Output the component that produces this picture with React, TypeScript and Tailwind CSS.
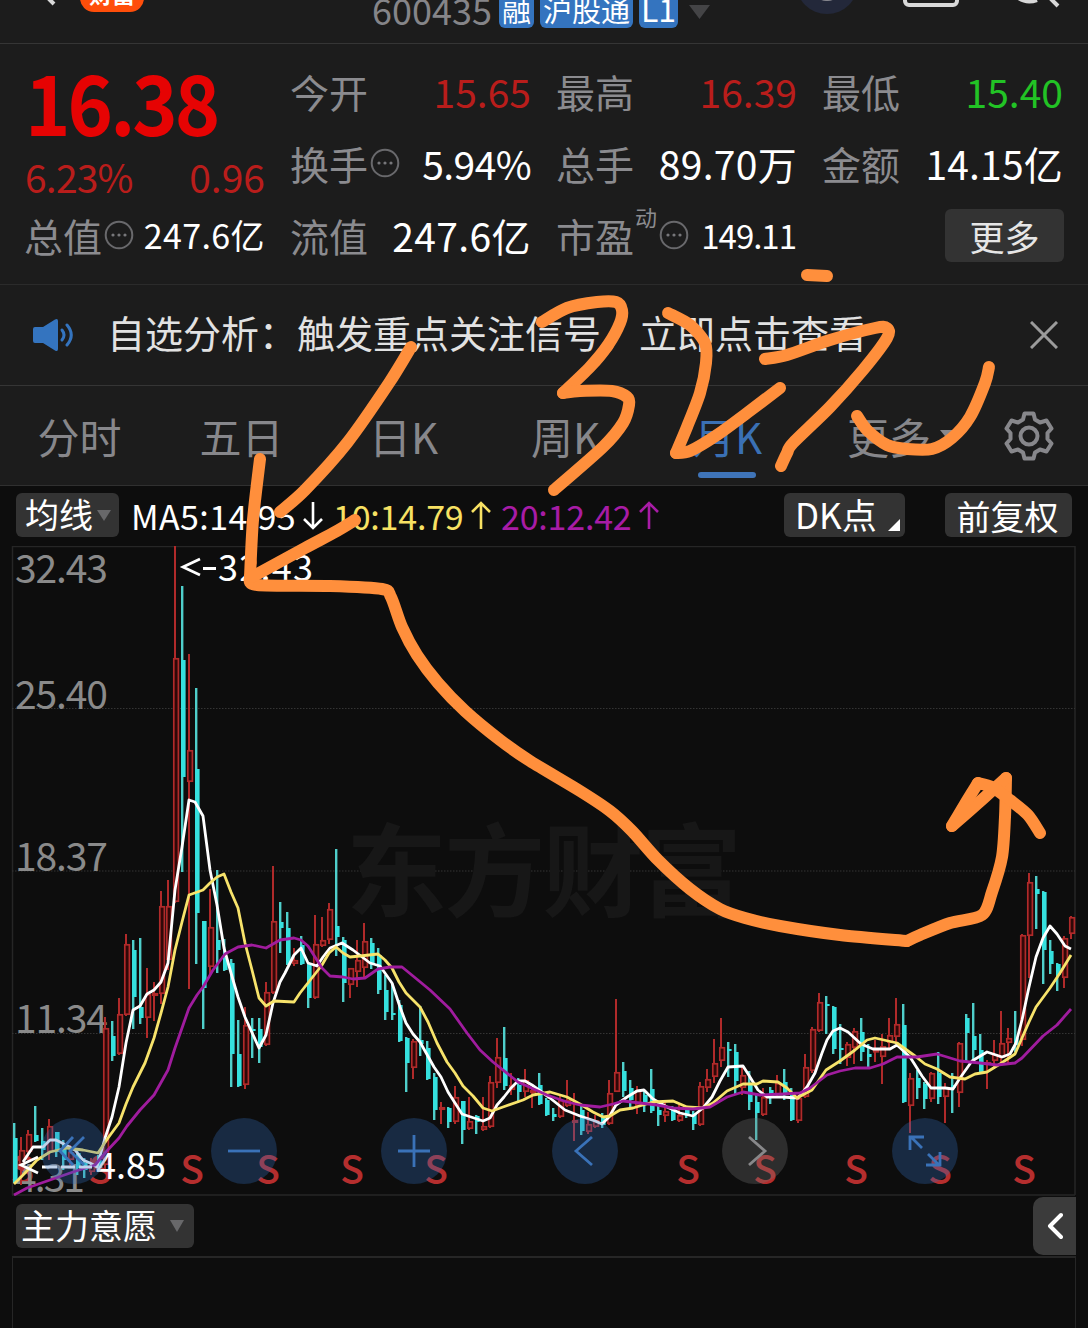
import clsx from "clsx";

type Point = [number, number];

// [kind, high, low, body top, body bottom] in chart pixels, one per month
type Candle = ["r" | "c", number, number, number, number];

const FONT = "font-['Noto_Sans_CJK_SC',sans-serif]";

const candles: Candle[] = [
  ["c", 1123, 1183, 1138, 1183], ["r", 1137, 1185, 1150, 1165], ["r", 1130, 1156, 1134, 1152], ["c", 1106, 1142, 1135, 1141],
  ["c", 1128, 1160, 1141, 1150], ["r", 1119, 1160, 1126, 1152], ["c", 1132, 1157, 1132, 1152], ["c", 1140, 1170, 1145, 1160],
  ["r", 1145, 1165, 1152, 1160], ["c", 1150, 1175, 1153, 1168], ["c", 1158, 1178, 1163, 1170], ["r", 1158, 1175, 1165, 1172],
  ["c", 1155, 1172, 1160, 1168], ["r", 1017, 1170, 1028, 1165], ["c", 1021, 1061, 1036, 1056], ["r", 998, 1055, 1014, 1054],
  ["r", 934, 1016, 944, 1015], ["c", 940, 1029, 950, 997], ["c", 938, 1024, 1007, 1018], ["r", 968, 1038, 994, 1018],
  ["r", 982, 1021, 993, 996], ["r", 891, 1004, 906, 994], ["r", 880, 970, 906, 960], ["r", 546, 903, 658, 902],
  ["c", 586, 872, 660, 777], ["r", 654, 989, 750, 782], ["c", 688, 964, 769, 913], ["c", 921, 1029, 921, 988],
  ["r", 889, 975, 927, 967], ["c", 870, 973, 940, 950], ["c", 939, 971, 958, 970], ["c", 959, 1087, 963, 1054],
  ["c", 1020, 1087, 1054, 1086], ["r", 1007, 1089, 1025, 1085], ["c", 1018, 1058, 1029, 1031], ["c", 1018, 1063, 1029, 1047],
  ["r", 982, 1046, 992, 1045], ["r", 866, 994, 921, 993], ["c", 902, 953, 922, 928], ["c", 912, 965, 928, 964],
  ["r", 948, 966, 960, 964], ["c", 936, 965, 945, 964], ["c", 963, 1008, 965, 998], ["r", 915, 999, 944, 998],
  ["r", 917, 947, 940, 946], ["r", 903, 944, 909, 940], ["c", 849, 956, 926, 937], ["c", 937, 1002, 940, 983],
  ["r", 968, 998, 968, 985], ["r", 940, 987, 960, 972], ["r", 923, 977, 941, 968], ["c", 938, 969, 943, 964],
  ["c", 948, 994, 955, 990], ["c", 975, 1020, 990, 1012], ["c", 983, 1020, 1013, 1015], ["c", 1000, 1042, 1005, 1041],
  ["c", 1037, 1092, 1038, 1063], ["r", 1039, 1079, 1041, 1068], ["c", 1006, 1056, 1040, 1044], ["c", 1041, 1080, 1048, 1079],
  ["c", 1073, 1120, 1077, 1110], ["r", 1102, 1124, 1107, 1110], ["c", 1107, 1128, 1108, 1122], ["r", 1086, 1124, 1097, 1122],
  ["c", 1101, 1144, 1101, 1130], ["r", 1097, 1130, 1121, 1129], ["c", 1115, 1134, 1116, 1122], ["r", 1097, 1131, 1126, 1130],
  ["r", 1076, 1128, 1082, 1127], ["r", 1038, 1088, 1057, 1083], ["c", 1027, 1090, 1058, 1086], ["r", 1073, 1095, 1085, 1090],
  ["c", 1078, 1102, 1085, 1092], ["r", 1069, 1097, 1080, 1092], ["r", 1088, 1108, 1090, 1093], ["c", 1073, 1105, 1085, 1104],
  ["c", 1098, 1116, 1100, 1115], ["c", 1108, 1121, 1114, 1117], ["r", 1095, 1118, 1100, 1117], ["r", 1080, 1107, 1100, 1106],
  ["r", 1093, 1141, 1120, 1123], ["c", 1105, 1135, 1110, 1131], ["r", 1112, 1134, 1124, 1132], ["r", 1115, 1128, 1120, 1127],
  ["c", 1113, 1128, 1116, 1125], ["r", 1080, 1125, 1093, 1124], ["r", 999, 1092, 1072, 1092], ["c", 1062, 1097, 1071, 1091],
  ["c", 1080, 1108, 1088, 1100], ["r", 1086, 1114, 1090, 1106], ["c", 1090, 1112, 1095, 1104], ["c", 1069, 1113, 1089, 1111],
  ["c", 1102, 1126, 1110, 1115], ["r", 1103, 1122, 1111, 1116], ["c", 1106, 1121, 1108, 1120], ["r", 1105, 1122, 1115, 1121],
  ["c", 1107, 1118, 1110, 1116], ["c", 1111, 1130, 1113, 1124], ["r", 1082, 1126, 1086, 1125], ["r", 1069, 1092, 1079, 1088],
  ["r", 1039, 1083, 1063, 1077], ["r", 1018, 1067, 1047, 1061], ["c", 1042, 1077, 1049, 1051], ["c", 1044, 1094, 1052, 1081],
  ["r", 1067, 1095, 1075, 1088], ["c", 1071, 1110, 1083, 1102], ["c", 1093, 1140, 1102, 1113], ["r", 1088, 1116, 1097, 1115],
  ["c", 1087, 1104, 1090, 1097], ["r", 1075, 1098, 1083, 1095], ["c", 1069, 1100, 1082, 1094], ["c", 1088, 1121, 1094, 1120],
  ["r", 1095, 1123, 1098, 1121], ["r", 1054, 1098, 1067, 1097], ["r", 1027, 1073, 1029, 1071], ["r", 993, 1032, 1002, 1031],
  ["c", 996, 1034, 1004, 1006], ["c", 1006, 1054, 1007, 1049], ["c", 1024, 1064, 1048, 1050], ["r", 1042, 1066, 1044, 1058],
  ["r", 1028, 1064, 1031, 1048], ["c", 1018, 1061, 1032, 1052], ["c", 1044, 1067, 1054, 1057], ["r", 1040, 1062, 1050, 1052],
  ["r", 1034, 1084, 1046, 1057], ["r", 1018, 1048, 1035, 1043], ["r", 998, 1043, 1024, 1037], ["c", 1004, 1103, 1025, 1102],
  ["r", 1073, 1133, 1078, 1106], ["c", 1070, 1099, 1078, 1088], ["c", 1082, 1109, 1084, 1099], ["r", 1072, 1102, 1073, 1099],
  ["c", 1052, 1104, 1073, 1097], ["r", 1083, 1123, 1087, 1097], ["c", 1073, 1113, 1085, 1088], ["r", 1042, 1107, 1043, 1093],
  ["c", 1014, 1062, 1018, 1033], ["c", 1003, 1062, 1036, 1050], ["c", 1034, 1073, 1050, 1072], ["r", 1060, 1089, 1062, 1065],
  ["r", 1040, 1067, 1054, 1061], ["r", 1011, 1065, 1043, 1058], ["r", 1028, 1063, 1038, 1043], ["c", 1011, 1052, 1038, 1045],
  ["r", 934, 1046, 935, 1040], ["r", 873, 978, 882, 936], ["c", 876, 929, 889, 894], ["c", 891, 984, 892, 950],
  ["c", 940, 974, 951, 964], ["c", 963, 991, 964, 975], ["r", 936, 988, 938, 978], ["r", 916, 939, 917, 934],
];

const ma5: Point[] = [
  [23, 1162], [33, 1147], [43, 1147], [50, 1140], [56, 1140], [62, 1143], [75, 1150], [83, 1160], [90, 1163], [97, 1167], [105, 1138],
  [112, 1117], [119, 1087], [126, 1043], [133, 1010], [140, 1006], [147, 994], [154, 990], [161, 982], [168, 963], [175, 890],
  [182, 847], [189, 800], [195, 802], [203, 816], [210, 870], [217, 905], [224, 948], [231, 973], [238, 997], [245, 1017],
  [259, 1048], [266, 1035], [273, 1003], [280, 982], [285, 973], [294, 955], [301, 948], [308, 963], [317, 966], [323, 957],
  [330, 948], [342, 943], [353, 950], [370, 963], [380, 966], [392, 983], [400, 1007], [406, 1023], [413, 1034], [420, 1042],
  [434, 1067], [441, 1077], [448, 1092], [462, 1114], [477, 1119], [483, 1121], [490, 1118], [497, 1105], [504, 1097],
  [511, 1088], [518, 1081], [525, 1081], [532, 1085], [550, 1098], [565, 1110], [580, 1116], [595, 1121], [602, 1124],
  [609, 1117], [616, 1105], [627, 1097], [637, 1091], [644, 1090], [653, 1099], [667, 1107], [680, 1113], [693, 1116],
  [703, 1108], [712, 1097], [720, 1081], [728, 1067], [743, 1066], [750, 1077], [758, 1090], [767, 1097], [782, 1097],
  [798, 1098], [807, 1087], [815, 1073], [822, 1053], [827, 1040], [833, 1031], [840, 1028], [848, 1032], [861, 1044],
  [873, 1049], [890, 1049], [897, 1045], [910, 1057], [922, 1076], [931, 1088], [945, 1088], [953, 1089], [960, 1078],
  [972, 1061], [987, 1052], [1002, 1057], [1010, 1054], [1016, 1043], [1022, 1020], [1029, 987], [1036, 957], [1043, 938],
  [1050, 926], [1057, 934], [1065, 946], [1071, 949],
];

const ma10: Point[] = [
  [14, 1184], [25, 1173], [37, 1160], [50, 1152], [67, 1148], [83, 1150], [98, 1153], [108, 1138], [119, 1123], [126, 1104],
  [133, 1087], [145, 1063], [154, 1038], [161, 1013], [168, 987], [175, 950], [182, 922], [189, 895], [203, 890], [210, 883],
  [217, 877], [224, 874], [231, 892], [238, 908], [245, 943], [252, 970], [259, 998], [266, 1006], [274, 1001], [294, 1002],
  [300, 993], [315, 974], [322, 965], [329, 953], [336, 947], [343, 953], [350, 957], [360, 956], [378, 954], [385, 960],
  [392, 968], [399, 982], [406, 993], [413, 1000], [420, 1007], [428, 1022], [437, 1043], [447, 1062], [455, 1073], [463, 1086],
  [473, 1096], [483, 1108], [492, 1111], [503, 1107], [523, 1100], [533, 1095], [550, 1092], [567, 1097], [580, 1104],
  [593, 1112], [603, 1117], [610, 1116], [620, 1110], [633, 1108], [653, 1102], [673, 1101], [687, 1107], [703, 1108],
  [713, 1103], [727, 1091], [743, 1084], [757, 1084], [763, 1081], [778, 1082], [787, 1088], [797, 1098], [812, 1090],
  [826, 1070], [840, 1061], [855, 1050], [867, 1040], [875, 1038], [897, 1043], [915, 1056], [925, 1064], [937, 1069],
  [950, 1077], [965, 1079], [975, 1074], [987, 1072], [1000, 1064], [1015, 1054], [1022, 1038], [1029, 1022], [1036, 1007],
  [1050, 988], [1060, 973], [1071, 955],
];

const ma20: Point[] = [
  [14, 1195], [27, 1188], [50, 1180], [73, 1172], [95, 1165], [105, 1153], [119, 1138], [127, 1126], [140, 1110], [154, 1095],
  [168, 1070], [175, 1048], [182, 1028], [189, 1008], [197, 995], [203, 987], [213, 970], [225, 954], [238, 947], [252, 945],
  [266, 948], [280, 940], [294, 938], [301, 940], [308, 946], [315, 957], [322, 968], [330, 976], [343, 977], [353, 979],
  [365, 978], [378, 969], [390, 967], [402, 967], [413, 976], [430, 990], [450, 1009], [467, 1033], [480, 1050], [493, 1062],
  [518, 1082], [547, 1095], [567, 1102], [580, 1105], [600, 1107], [613, 1104], [623, 1101], [640, 1103], [657, 1105],
  [673, 1108], [693, 1109], [710, 1107], [727, 1097], [743, 1092], [760, 1095], [783, 1094], [800, 1093], [810, 1088],
  [827, 1075], [840, 1071], [855, 1068], [870, 1068], [883, 1064], [897, 1057], [917, 1057], [937, 1054], [947, 1057],
  [960, 1061], [980, 1063], [997, 1065], [1015, 1063], [1022, 1058], [1043, 1036], [1057, 1025], [1071, 1009],
];

// Hand drawn notes over the page
const strokes: Point[][] = [
  [[807, 275], [827, 276]],
  [[542, 322], [567, 308], [597, 302], [616, 302], [622, 310], [620, 323], [608, 345], [590, 367], [563, 393]],
  [[563, 393], [580, 391], [612, 391], [627, 397], [629, 405], [623, 423], [603, 447], [554, 490]],
  [[668, 313], [690, 325], [705, 343], [706, 363], [700, 393], [687, 427], [676, 453]],
  [[676, 453], [690, 451], [717, 435], [747, 413], [780, 388]],
  [[765, 359], [787, 355], [830, 340], [875, 328], [887, 328], [887, 338], [863, 370], [830, 407], [793, 443], [787, 453], [781, 466]],
  [[857, 416], [867, 430], [887, 445], [907, 449], [932, 449], [952, 438], [970, 417], [985, 383], [989, 367]],
  [[411, 347], [389, 383], [347, 443], [305, 490], [280, 512]],
  [[260, 459], [253, 520], [250, 577]],
  [[250, 577], [257, 585], [330, 586], [382, 589], [391, 597], [402, 627], [417, 655], [438, 683],
    [465, 711], [500, 740], [530, 761], [580, 791], [610, 811], [632, 831], [658, 860], [690, 889], [720, 909], [745, 918],
    [780, 926], [840, 935], [907, 941]],
  [[907, 941], [920, 935], [950, 923], [982, 915], [992, 892], [1002, 857], [1005, 817], [1006, 778]],
  [[355, 520], [335, 532], [305, 548], [252, 577]],
  [[1006, 778], [985, 797], [952, 826]],
  [[952, 826], [965, 804], [978, 783]],
  [[978, 783], [992, 787], [1010, 800], [1028, 815], [1040, 833]],
];

const signals = [22, 100, 192, 268, 352, 436, 688, 765, 856, 940, 1024];

const priceLabels = [
  { text: "32.43", y: 583, width: 91 },
  { text: "25.40", y: 709, width: 91 },
  { text: "18.37", y: 871, width: 91 },
  { text: "11.34", y: 1033, width: 91 },
  { text: "4.31", y: 1192, width: 68 },
];

const tabs = ["分时", "五日", "日K", "周K", "月K"];

const toLine = (points: Point[]) => points.map((p) => p.join(",")).join(" ");

// Smooth curve through every point
const toCurve = (points: Point[]) => {
  let d = `M${points[0][0]} ${points[0][1]}`;
  for (let i = 0; i < points.length - 1; i++) {
    const a = points[i - 1] ?? points[i];
    const b = points[i];
    const c = points[i + 1];
    const e = points[i + 2] ?? c;
    d += ` C${b[0] + (c[0] - a[0]) / 7} ${b[1] + (c[1] - a[1]) / 7} ${c[0] - (e[0] - b[0]) / 7} ${c[1] - (e[1] - b[1]) / 7} ${c[0]} ${c[1]}`;
  }
  return d;
};

const Dots = () => (
  <svg className="ml-[2px] h-[30px] w-[30px] shrink-0" viewBox="0 0 30 30" fill="#77777a">
    <circle cx="15" cy="15" r="13.3" fill="none" stroke="#69696c" strokeWidth="2" />
    <circle cx="9" cy="15" r="1.6" />
    <circle cx="15" cy="15" r="1.6" />
    <circle cx="21" cy="15" r="1.6" />
  </svg>
);

const Triangle = ({ className }: { className: string }) => (
  <svg className={className} viewBox="0 0 16 14" preserveAspectRatio="none" fill="currentColor">
    <path d="M0 0H16L8 14Z" />
  </svg>
);

interface QuoteProps {
  label: string;
  value: string;
  color?: string;
  info?: boolean;
}
const Quote = ({ label, value, color = "text-white", info }: QuoteProps) => (
  <div className="flex items-center justify-between text-[39px]">
    <span className="-ml-px flex items-center text-[#8b8b8f]">
      {label}
      {info && <Dots />}
    </span>
    <span className={color}>{value}</span>
  </div>
);

const Header = () => (
  <header className="flex h-11 items-start overflow-hidden border-b border-[#353535]">
    <svg className="ml-[40px] h-2 w-5" viewBox="0 0 20 8" fill="none" stroke="#d8d8d8" strokeWidth="4">
      <path d="M4 -6L14 4" />
    </svg>
    <div className="-mt-7 ml-5 flex h-10 w-16 items-end justify-center overflow-hidden rounded-[14px] bg-[#ff4e0a] pb-[7px] text-[23px] leading-none font-bold text-white">
      财富
    </div>
    <div className="-mt-[13px] ml-[228px] flex text-white">
      <span className="h-10 w-[127px] text-[36px] leading-[45px] text-[#858589]">600435</span>
      <span className="h-[41px] w-[35px] rounded-md bg-[#3474bf] text-center text-[29px] leading-[45px]">融</span>
      <span className="ml-[6px] h-[41px] w-[93px] rounded-md bg-[#3474bf] text-center text-[29px] leading-[45px]">沪股通</span>
      <span className="ml-[6px] h-[41px] w-[39px] rounded-md bg-[#3474bf] text-center text-[32px] leading-[42px]">L1</span>
    </div>
    <Triangle className="mt-[5px] ml-[11px] h-[14px] w-[21px] text-[#444446]" />
    <div className="-mt-[52px] ml-[86px] h-[66px] w-[62px] rounded-full bg-[#23283a]">
      <div className="mx-auto mt-[42px] h-[11px] w-6 rounded-b-full border-b-2 border-[#85858d]" />
    </div>
    <div className="-mt-5 ml-[45px] h-[27px] w-[56px] rounded-md border-4 border-[#d8d8d8]" />
    <svg className="ml-[58px] h-2 w-12" viewBox="0 0 48 8" fill="none" stroke="#d8d8d8" strokeWidth="4">
      <path d="M0 -3Q9 4 20 0M31 -4L41 6" />
    </svg>
  </header>
);

const QuotePanel = () => (
  <section className="grid h-[241px] grid-cols-4 grid-rows-[72px_72px_72px] gap-x-[26px] border-b border-[#2b2b2b] px-[25px] pt-[11px] leading-[72px]">
    <div className="row-span-2">
      <div className="flex h-[84px] items-center pt-[5px]">
        <span className="origin-left scale-x-[0.93] text-[83px] font-bold tracking-[-3.2px] text-[#e60303]">16.38</span>
      </div>
      <div className="flex h-[60px] items-center justify-between pt-[13px] text-[39px] text-[#b91d1b]">
        <span className="tracking-[-0.8px]">6.23%</span>
        <span>0.96</span>
      </div>
    </div>
    <Quote label="今开" value="15.65" color="text-[#b91d1b]" />
    <Quote label="最高" value="16.39" color="text-[#b91d1b]" />
    <Quote label="最低" value="15.40" color="text-[#22c325]" />
    <Quote label="换手" value="5.94%" color="text-white tracking-[-0.6px]" info />
    <Quote label="总手" value="89.70万" color="text-white tracking-[0.3px]" />
    <Quote label="金额" value="14.15亿" color="text-white tracking-[0.2px]" />
    <Quote label="总值" value="247.6亿" color="text-[34px] text-white tracking-[0.4px]" info />
    <Quote label="流值" value="247.6亿" color="text-white tracking-[0.4px]" />
    <div className="flex items-center text-[39px] text-[#8b8b8f]">
      <span className="-ml-px">市盈</span>
      <span className="mb-[39px] ml-px text-[22px] leading-none">动</span>
      <Dots />
      <span className="mr-px ml-auto text-[33px] tracking-[-1px] text-white">149.11</span>
    </div>
    <div className="-mr-px flex items-center justify-end">
      <button className="h-[53px] w-[119px] rounded-md bg-[#333333] text-[35px] leading-[49px] text-[#e6e6e6]">更多</button>
    </div>
  </section>
);

const Notice = () => (
  <section className="flex h-[101px] items-center border-b border-[#353535] pl-8">
    <svg className="h-9 w-[44px]" viewBox="0 0 44 36" fill="none" stroke="#3474bf" strokeWidth="3" strokeLinecap="round">
      <path d="M3 10H11L23 2.5Q26 1 26 4V32Q26 35 23 33.5L11 26H3Q1 26 1 24V12Q1 10 3 10Z" fill="#3474bf" stroke="none" />
      <path d="M30 13Q34 18 30 23" />
      <path d="M35 8Q43.500 18 35 28" />
    </svg>
    <p className="mb-[6px] ml-[31px] text-[38px] leading-none whitespace-pre text-[#e2e2e2]">自选分析：触发重点关注信号，立即点击查看</p>
    <svg className="mr-[30px] ml-auto h-7 w-7" viewBox="0 0 28 28" stroke="#9b9b9b" strokeWidth="3">
      <path d="M1 1L27 27M27 1L1 27" />
    </svg>
  </section>
);

const Tabs = () => (
  <nav className="flex h-[100px] items-center border-b border-[#303030] text-[42px] leading-[97px] text-[#87878b]">
    {tabs.map((tab) => (
      <div
        key={tab}
        className={clsx("relative h-[98px] w-[162px] pr-[3px] text-center", tab === "月K" && "text-[#3a70b4]")}
      >
        {tab}
        {tab === "月K" && <span className="absolute bottom-[7px] left-[50px] h-[6px] w-[58px] rounded-full bg-[#3f74b8]" />}
      </div>
    ))}
    <div className="flex h-[98px] w-[162px] items-center pl-[37px]">
      <span className="h-[98px]">更多</span>
      <Triangle className="ml-[9px] h-[11px] w-[18px]" />
    </div>
    <svg className="ml-[32px] h-[50px] w-[50px]" viewBox="0 0 50 50" fill="none" stroke="#87878b" strokeWidth="4" strokeLinejoin="round">
      <path d="M20.500 2.500H29.500L31 8.500L36 11.500L42.500 9.500L47.500 17.500L43.500 22V28L47.500 32.500L42.500 40.500L36 38.500L31 41.500L29.500 47.500H20.500L19 41.500L14 38.500L7.500 40.500L2.500 32.500L6.500 28V22L2.500 17.500L7.500 9.500L14 11.500L19 8.500Z" />
      <circle cx="25" cy="25" r="8.500" />
    </svg>
  </nav>
);

const Toolbar = () => (
  <div className="flex h-[60px] items-center pr-4 pb-[2px] pl-4 text-[34px] leading-[43px] whitespace-nowrap text-white">
    <button className="flex h-[44px] w-[103px] items-center rounded-md bg-[#333333] pl-[9px]">
      <span className="h-[44px] leading-[42px]">均线</span>
      <Triangle className="ml-[4px] h-[11px] w-[14px] text-[#68686a]" />
    </button>
    <span className="ml-3 w-[202px] tracking-[0.4px]">MA5:14.95</span>
    <span className="w-[168px] tracking-[-0.2px] text-[#f7e163]">10:14.79</span>
    <span className="tracking-[-0.2px] text-[#a81ca6]">20:12.42</span>
    <button className="ml-auto flex h-[44px] w-[121px] rounded-md bg-[#333333] pl-[11px] text-[35px] leading-[41px]">
      DK点
      <svg className="mt-[26px] ml-[11px] h-3 w-3" viewBox="0 0 12 12" fill="#ffffff">
        <path d="M12 0V12H0Z" />
      </svg>
    </button>
    <button className="ml-[40px] h-[44px] w-[127px] rounded-md bg-[#333333] pr-[2px] leading-[41px]">前复权</button>
  </div>
);

// Trend arrows that follow each moving average value
const TrendArrows = () => (
  <g fill="none" strokeWidth="2.6">
    <path d="M313 502V528M304 519L313 528L322 519" stroke="#ffffff" />
    <path d="M481 529V503M472 512L481 503L490 512" stroke="#f7e163" />
    <path d="M649 529V503M640 512L649 503L658 512" stroke="#a81ca6" />
  </g>
);

const CandleBar = ({ candle, index }: { candle: Candle; index: number }) => {
  const [kind, high, low, top, bottom] = candle;
  const x = 14 + index * 7;
  const height = Math.max(bottom - top, 2);

  if (kind === "c") {
    return (
      <g fill="#35e0de">
        <rect x={x - 1} y={high} width="2.400" height={low - high} fill="#4fcfcb" />
        <rect x={x - 1} y={top} width="4.600" height={height} />
      </g>
    );
  }
  return (
    <g fill="#b02a2a">
      <rect x={x - 1} y={high} width="2" height={Math.max(top - high, 0)} />
      <rect x={x - 1} y={bottom} width="2" height={Math.max(low - bottom, 0)} />
      <rect x={x - 1.2} y={top + 0.8} width="4.600" height={Math.max(height - 1.6, 1)} fill="#300808" stroke="#b02a2a" strokeWidth="1.700" />
    </g>
  );
};

const controls = [
  { x: 74, path: "M-1 -14L-14 0L-1 14M10 -14L-4 0L10 14" },
  { x: 244, path: "M-16 0H16" },
  { x: 414, path: "M-16 0H16M0 -16V16" },
  { x: 585, path: "M7 -14L-9 0L7 14" },
  { x: 755, path: "M-6 -14L10 0L-6 14", muted: true },
  { x: 925, path: "M-15 -1V-14H-1M-14 -14L-3 -3M15 1V14H1M14 14L3 3" },
];

const Chart = () => (
  <svg className="block h-[650px] w-full" viewBox="0 546 1088 650">
    <g stroke="#262626" fill="none">
      <path d="M12.500 546V1195M1075 546V1195" strokeWidth="1.500" />
      <path d="M12 546.500H1075M12 1195H1075" strokeWidth="1.600" />
      <path d="M12 708.500H1075M12 871H1075M12 1033.500H1075" stroke="#343434" strokeDasharray="1.500 1.500" />
    </g>
    <text x="346" y="909" fontSize="101" fontWeight="700" fill="#171717" textLength="396">东方财富</text>

    {signals.map((x) => (
      <text key={x} x={x} y="1184" fontSize="39" fontWeight="500" textAnchor="middle" fill="#b52e2e">S</text>
    ))}
    <g fontSize="39" fill="#8a8a8a">
      {priceLabels.map((label) => (
        <text key={label.text} x="15" y={label.y} textLength={label.width + 2}>{label.text}</text>
      ))}
    </g>
    {candles.map((candle, index) => (
      <CandleBar key={index} candle={candle} index={index} />
    ))}

    <g fill="none" strokeLinejoin="round" strokeWidth="2.800">
      <polyline points={toLine(ma5)} stroke="#ffffff" />
      <polyline points={toLine(ma10)} stroke="#f7e36b" />
      <polyline points={toLine(ma20)} stroke="#a01c9e" />
    </g>

    <g fontSize="36" fill="#ffffff">
      <text x="218" y="581" textLength="95">32.43</text>
      <text x="96" y="1179" textLength="70">4.85</text>
    </g>
    <path
      d="M200 559L183 567L200 575M203 568.500H216M38 1157L21 1165L38 1173M42 1167H57M61 1167H75M79 1167H92"
      stroke="#ffffff"
      strokeWidth="2.800"
      fill="none"
    />

    {controls.map(({ x, path, muted }) => (
      <g key={x} transform={`translate(${x} 1151)`}>
        <circle r="33" fill={muted ? "#787878" : "#326ebe"} fillOpacity="0.300" />
        <path d={path} fill="none" stroke={muted ? "#88888a" : "#3a72b8"} strokeWidth="2.800" />
      </g>
    ))}
  </svg>
);

const SubChart = () => (
  <section>
    <div className="flex h-[60px] items-start justify-between pr-3 pl-4">
      <button className="mt-[8px] flex h-[44px] w-[178px] items-center rounded-md bg-[#333333] pl-[5px] text-[34px] leading-[41px] text-white">
        <span className="h-[44px]">主力意愿</span>
        <Triangle className="ml-[13px] h-3 w-[14px] text-[#68686a]" />
      </button>
      <button className="mt-px flex h-[58px] w-[43px] items-center justify-center rounded-l-[10px] bg-[#3b3b3b]">
        <svg className="h-7 w-4" viewBox="0 0 16 28" fill="none" stroke="#ffffff" strokeWidth="4" strokeLinecap="round" strokeLinejoin="round">
          <path d="M14 3L3 14L14 25" />
        </svg>
      </button>
    </div>
    <div className="mr-3 ml-3 h-20 border-x border-t-2 border-[#262626]" />
  </section>
);

const Annotations = () => (
  <svg className="pointer-events-none absolute inset-0 h-[1328px] w-[1088px]" viewBox="0 0 1088 1328" fill="none">
    <TrendArrows />
    <g stroke="#ff8f3c" strokeWidth="12" strokeLinecap="round" strokeLinejoin="round">
      {strokes.map((points, index) => (
        <path key={index} d={toCurve(points)} />
      ))}
    </g>
  </svg>
);

const App = () => {
  return (
    <main className={clsx("relative h-[1328px] w-[1088px] overflow-hidden bg-[#0d0d0d]", FONT)}>
      <div className="bg-[#1c1c1c]">
        <Header />
        <QuotePanel />
        <Notice />
        <Tabs />
      </div>
      <Toolbar />
      <Chart />
      <SubChart />
      <Annotations />
    </main>
  );
};

export default App;
